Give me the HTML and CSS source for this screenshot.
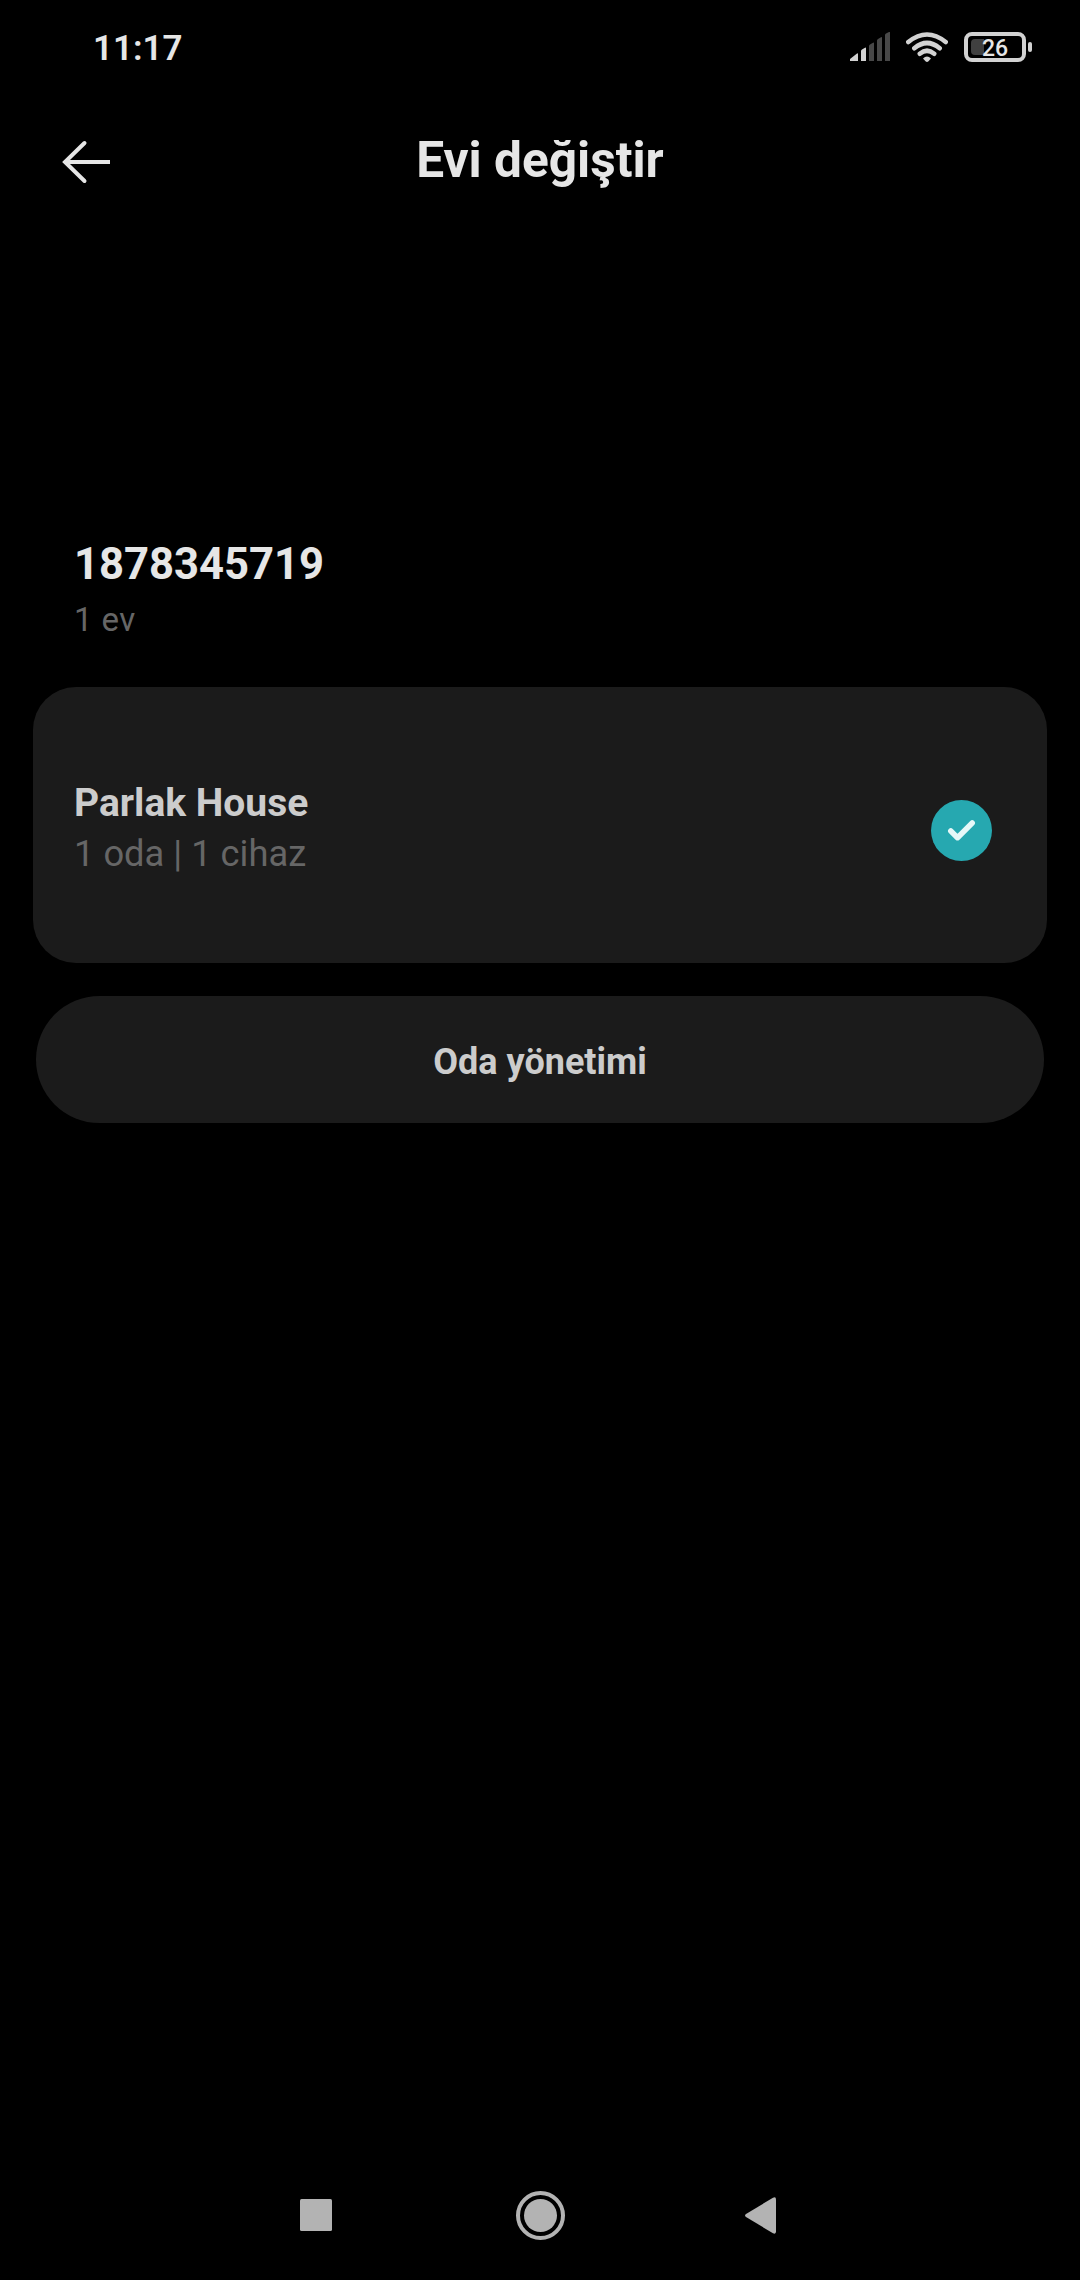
FILE: index.html
```html
<!DOCTYPE html>
<html lang="tr">
<head>
    <meta charset="UTF-8">
    <meta name="viewport" content="width=device-width, initial-scale=1.0">
    <title>Evi değiştir</title>
    <link rel="stylesheet" href="styles.css">
</head>
<body>

    <div class="status-bar">
        <span class="time">11:17</span>
        <div class="status-icons">
            <svg class="signal" width="40" height="30" viewBox="0 0 40 30">
                <path class="on" d="M0 29v-2l7-5.500q1-.5 1 .5v7zM11 29v-10q0-1 1-1.500l3-1.800q1-.5 1 .5v12.800z"/>
                <path class="off" d="M19 29v-15q0-1 1-1.500l3-1.800q1-.5 1 .5v17.800zM27 29v-20.500q0-1 1-1.500l3-1.800q1-.5 1 .5v23.300zM35 29v-26q0-1 1-1.500l3-1.500q1-.5 1 .5v28.500z"/>
            </svg>
            <svg class="wifi" width="42" height="30" viewBox="0 0 42 30">
                <path class="arc" d="M2.300 10Q21-5 39.700 10M8.300 16.200Q21 5.800 33.700 16.200M13.800 21.700Q21 15.800 28.200 21.700"/>
                <path class="dot" d="M17 26.500Q21 22.500 25 26.500L22.500 29.300Q21 30.700 19.500 29.300z"/>
            </svg>
            <div class="battery">
                <div class="battery-body">
                    <span class="battery-level"></span>
                    <span class="battery-text">26</span>
                </div>
                <span class="battery-tip"></span>
            </div>
        </div>
    </div>

    <header class="header">
        <svg class="back" width="50" height="44" viewBox="0 0 50 44">
            <path class="shaft" d="M48 22H3"/>
            <path d="M22.500 3L3 22L22.500 41"/>
        </svg>
        <h1>Evi değiştir</h1>
    </header>

    <main class="content">
        <div class="account">
            <h2>1878345719</h2>
            <p>1 ev</p>
        </div>

        <div class="home-card">
            <div class="home-info">
                <h3>Parlak House</h3>
                <p>1 oda | 1 cihaz</p>
            </div>
            <svg class="check" width="61" height="61" viewBox="0 0 61 61">
                <circle cx="30.500" cy="30.500" r="30.500"/>
                <path d="M19.800 31L26.500 37.700L41.200 23"/>
            </svg>
        </div>

        <button class="room-button" type="button">Oda yönetimi</button>
    </main>

    <nav class="nav-bar">
        <svg width="32" height="32" viewBox="0 0 32 32">
            <rect width="32" height="32" rx="1.500"/>
        </svg>
        <svg class="home" width="49" height="49" viewBox="0 0 49 49">
            <circle class="ring" cx="24.500" cy="24.500" r="22.500"/>
            <circle cx="24.500" cy="24.500" r="16.500"/>
        </svg>
        <svg width="31" height="37" viewBox="0 0 31 37">
            <path d="M1 17L28 .7Q31-.5 31 2.500V34.500Q31 37.500 28 36.300L1 20Q-1 18.500 1 17z"/>
        </svg>
    </nav>

</body>
</html>
```
FILE: styles.css
```css
* {
    box-sizing: border-box;
}

body {
    font-family: Roboto, "Liberation Sans", sans-serif;
    background-color: #000;
    color: #e6e6e6;
    margin: 0;
    height: 2280px;
    display: flex;
    flex-direction: column;
}

h1, h2, h3, p {
    margin: 0;
}

svg {
    display: block;
}

/* Status bar */
.status-bar {
    display: flex;
    justify-content: space-between;
    align-items: center;
    height: 94px;
    padding: 0 48px 0 93px;
}

.time {
    font-size: 35px;
    font-weight: 600;
    line-height: 42px;
    padding-top: 4px;
}

.status-icons {
    display: flex;
    align-items: center;
}

.on, .dot {
    fill: #d2d2d2;
}

.off {
    fill: #484848;
}

.wifi {
    margin: 0 16px;
}

.arc {
    fill: none;
    stroke: #d2d2d2;
    stroke-width: 4.6;
    stroke-linecap: round;
}

.battery {
    display: flex;
    align-items: center;
    gap: 2px;
}

.battery-body {
    position: relative;
    width: 62px;
    height: 30px;
    border: 4px solid #d2d2d2;
    border-radius: 8px;
    text-align: center;
}

.battery-level {
    position: absolute;
    left: 3px;
    top: 3px;
    width: 13px;
    height: 16px;
    border-radius: 4px 0 0 4px;
    background-color: #404040;
}

.battery-text {
    position: relative;
    display: block;
    font-size: 23px;
    font-weight: 500;
    line-height: 25px;
    color: #e6e6e6;
}

.battery-tip {
    width: 4px;
    height: 10px;
    border-radius: 2px;
    background-color: #d2d2d2;
}

/* Header */
.header {
    display: grid;
    grid-template-columns: 50px 1fr 50px;
    align-items: center;
    height: 136px;
    padding: 0 62px;
}

.back {
    fill: none;
    stroke: #e6e6e6;
    stroke-width: 4;
    stroke-linecap: round;
}

.shaft {
    stroke-linecap: butt;
}

.header h1 {
    font-size: 49.6px;
    line-height: 60px;
    padding-bottom: 5px;
    text-align: center;
}

/* Content */
.content {
    flex: 1;
    padding: 307px 33px 0;
}

.account {
    height: 150px;
    padding-left: 41px;
}

.account h2 {
    font-size: 43.6px;
    line-height: 56px;
}

.account p {
    font-size: 33px;
    line-height: 40px;
    margin-top: 7px;
    letter-spacing: 0.4px;
    color: #666;
}

.home-card {
    display: flex;
    justify-content: space-between;
    align-items: center;
    height: 276px;
    padding: 0 55px 0 41px;
    border-radius: 43px;
    background-color: #1b1b1b;
}

.home-info {
    padding-top: 7px;
}

.home-info h3 {
    font-size: 39px;
    line-height: 48px;
    color: #ccc;
}

.home-info p {
    font-size: 36.3px;
    line-height: 48px;
    margin-top: 3px;
    color: #666;
}

.check {
    margin-top: 11px;
}

.check circle {
    fill: #26a8b0;
}

.check path {
    fill: none;
    stroke: #e6f8f8;
    stroke-width: 5.5;
    stroke-linecap: round;
    stroke-linejoin: round;
}

.room-button {
    display: block;
    width: 1008px;
    height: 127px;
    margin: 33px 3px 0;
    padding: 4px 0 0;
    border: none;
    border-radius: 64px;
    background-color: #1b1b1b;
    font-family: inherit;
    font-size: 36px;
    font-weight: 700;
    color: #ccc;
}

/* Navigation bar */
.nav-bar {
    display: flex;
    justify-content: space-between;
    align-items: center;
    height: 130px;
    padding: 0 304px 0 300px;
    fill: #b3b3b3;
}

.home {
    margin-left: 3px;
}

.ring {
    fill: none;
    stroke: #b3b3b3;
    stroke-width: 4;
}
```
